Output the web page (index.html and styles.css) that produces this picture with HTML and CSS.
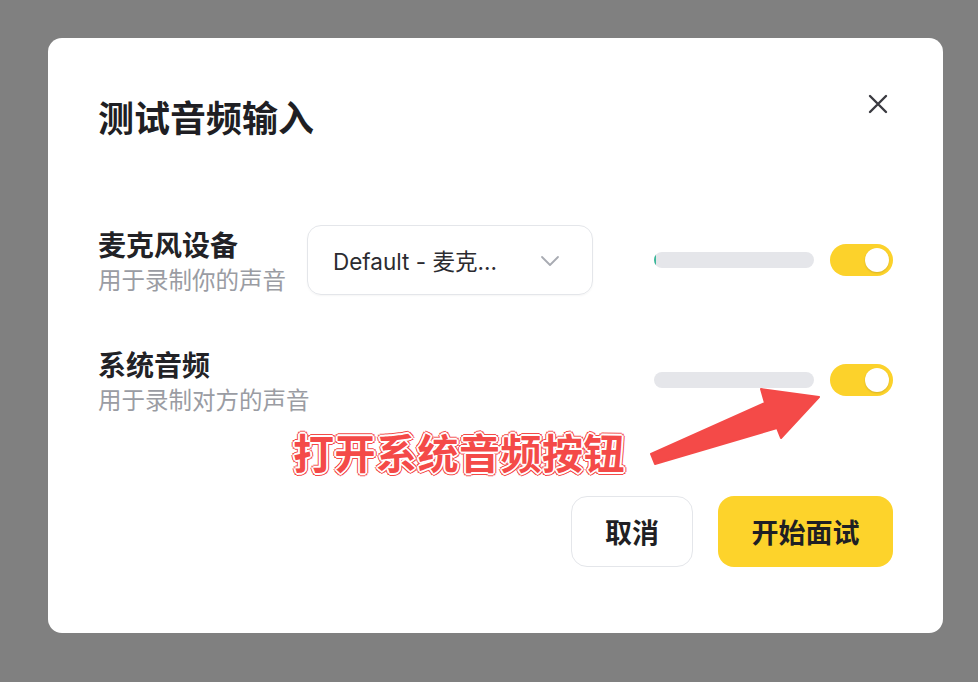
FILE: index.html
```html
<!DOCTYPE html>
<html lang="zh-CN">
<head>
  <meta charset="UTF-8">
  <meta name="viewport" content="width=device-width, initial-scale=1.0">
  <title>测试音频输入</title>
  <link rel="stylesheet" href="styles.css">
</head>
<body>
  <div class="modal">
    <div class="modal-header">
      <h1 class="modal-title">测试音频输入</h1>
      <button class="close-btn" aria-label="关闭">
        <svg width="20" height="20" viewBox="0 0 20 20">
          <path d="M2 2 L18 18 M18 2 L2 18" stroke="#3a3a40" stroke-width="2.4" stroke-linecap="round" fill="none"/>
        </svg>
      </button>
    </div>

    <div class="rows">
      <!-- Microphone row -->
      <div class="row">
        <div class="row-label">
          <div class="label">麦克风设备</div>
          <div class="sub">用于录制你的声音</div>
        </div>
        <div class="select">
          <span class="select-text">Default - 麦克...</span>
          <svg class="chevron" width="20" height="12" viewBox="0 0 20 12">
            <path d="M2 2 L10 10 L18 2" stroke="#a8abb2" stroke-width="1.8" stroke-linecap="round" stroke-linejoin="round" fill="none"/>
          </svg>
        </div>
        <div class="meter-group">
          <div class="meter"><div class="meter-fill" style="width:2px"></div></div>
          <div class="toggle on"><div class="knob"></div></div>
        </div>
      </div>

      <!-- System audio row -->
      <div class="row">
        <div class="row-label">
          <div class="label">系统音频</div>
          <div class="sub">用于录制对方的声音</div>
        </div>
        <div class="meter-group">
          <div class="meter"></div>
          <div class="toggle on"><div class="knob"></div></div>
        </div>
      </div>
    </div>

    <div class="modal-footer">
      <button class="btn btn-cancel">取消</button>
      <button class="btn btn-primary">开始面试</button>
    </div>
  </div>

  <!-- Annotation overlay -->
  <div class="note">打开系统音频按钮</div>
  <svg class="arrow" width="978" height="682" viewBox="0 0 978 682">
    <polygon points="651,454 655,464 777,428 781,438 819,397 761,389 765,403" fill="#f44a48" stroke="#f44a48" stroke-width="2" stroke-linejoin="round"/>
  </svg>
</body>
</html>
```

FILE: styles.css
```css
body {
  margin: 0;
  padding: 0;
  background: #808080;
  font-family: "Inter", "Noto Sans CJK SC", sans-serif;
  width: 978px;
  height: 682px;
  overflow: hidden;
  position: relative;
}
.modal {
  box-sizing: border-box;
  margin: 38px 0 0 48px;
  width: 895px;
  height: 595px;
  background: #fff;
  border-radius: 14px;
  padding: 58px 50px 66px 50px;
  display: flex;
  flex-direction: column;
}
.modal-header {
  display: flex;
  justify-content: space-between;
  align-items: center;
  height: 40px;
}
.modal-title {
  margin: 0;
  font-family: "Noto Sans CJK SC", sans-serif;
  font-size: 36px;
  font-weight: 700;
  color: #1f1f24;
  line-height: 40px;
}
.close-btn {
  border: none;
  background: none;
  padding: 0;
  width: 20px;
  height: 20px;
  margin-top: -24px;
  margin-right: 5px;
  cursor: pointer;
  display: flex;
}
.rows {
  margin-top: 89px;
  display: flex;
  flex-direction: column;
  gap: 50px;
}
.row {
  display: flex;
  align-items: center;
  height: 70px;
}
.row-label {
  width: 209px;
  flex-shrink: 0;
  display: flex;
  flex-direction: column;
  gap: 3px;
  white-space: nowrap;
}
.label {
  font-family: "Noto Sans CJK SC", sans-serif;
  font-size: 28px;
  font-weight: 700;
  line-height: 34px;
  color: #222226;
}
.sub {
  font-family: "Noto Sans CJK SC", sans-serif;
  font-size: 23.5px;
  line-height: 30px;
  color: #9a9ca3;
}
.select {
  box-sizing: border-box;
  width: 286px;
  height: 70px;
  border: 1.5px solid #e4e6ea;
  border-radius: 14px;
  display: flex;
  align-items: center;
  justify-content: space-between;
  padding: 0 32px 0 25px;
  box-shadow: 0 1px 2px rgba(0, 0, 0, 0.04);
}
.select-text {
  font-size: 22.5px;
  color: #2b2b30;
}
.chevron {
  margin-top: 2px;
}
.meter-group {
  margin-left: auto;
  display: flex;
  align-items: center;
  gap: 16px;
}
.meter {
  width: 160px;
  height: 16px;
  border-radius: 8px;
  background: #e5e6ea;
  overflow: hidden;
}
.meter-fill {
  height: 100%;
  background: #3bb89a;
}
.toggle {
  box-sizing: border-box;
  width: 63px;
  height: 32px;
  border-radius: 16px;
  background: #d9dbe0;
  padding: 4px;
  display: flex;
}
.toggle.on {
  background: #fcd22b;
  justify-content: flex-end;
}
.knob {
  width: 24px;
  height: 24px;
  border-radius: 50%;
  background: #fff;
  box-shadow: 0 1px 2px rgba(0, 0, 0, 0.15);
}
.modal-footer {
  margin-top: auto;
  display: flex;
  justify-content: flex-end;
  gap: 25px;
}
.btn {
  box-sizing: border-box;
  height: 71px;
  border-radius: 16px;
  font-family: "Noto Sans CJK SC", sans-serif;
  font-size: 27px;
  font-weight: 700;
  color: #1f1f24;
  cursor: pointer;
}
.btn-cancel {
  width: 122px;
  background: #fff;
  border: 1.5px solid #e4e6ea;
}
.btn-primary {
  width: 175px;
  background: #fdd32b;
  border: none;
}
.note {
  position: absolute;
  left: 293px;
  top: 427px;
  font-family: "Noto Sans CJK SC", sans-serif;
  font-size: 41px;
  font-weight: 700;
  line-height: 48px;
  letter-spacing: 0.5px;
  color: #f44a48;
  text-shadow:
    0 0 1px #fff, 1px 1px 0 #fff, -1px -1px 0 #fff, 1px -1px 0 #fff, -1px 1px 0 #fff,
    2px 0 0 #fff, -2px 0 0 #fff, 0 2px 0 #fff, 0 -2px 0 #fff,
    3px 0 0 #f44a48, -3px 0 0 #f44a48, 0 3px 0 #f44a48, 0 -3px 0 #f44a48,
    2px 2px 0 #f44a48, -2px -2px 0 #f44a48, 2px -2px 0 #f44a48, -2px 2px 0 #f44a48;
}
.arrow {
  position: absolute;
  left: 0;
  top: 0;
  pointer-events: none;
}
```
